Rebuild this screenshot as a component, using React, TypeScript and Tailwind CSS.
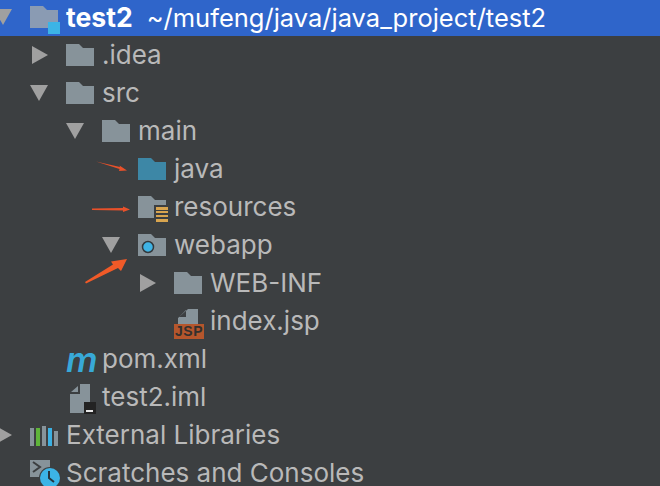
import React from "react";

const FOLDER = "M0 0H13L17 4H28V22H0Z";

function Folder({ color = "#87939a" }: { color?: string }) {
  return (
    <svg width="28" height="22" viewBox="0 0 28 22" className="block overflow-visible">
      <path d={FOLDER} fill={color} />
    </svg>
  );
}

function Down() {
  return (
    <svg width="18" height="16" viewBox="0 0 18 16" className="block">
      <path d="M0 0H18L9 16Z" fill="#a0a0a0" />
    </svg>
  );
}

function Right() {
  return (
    <svg width="16" height="18" viewBox="0 0 16 18" className="block ml-[2px]">
      <path d="M0 0L16 9L0 18Z" fill="#a0a0a0" />
    </svg>
  );
}

function ModuleIcon() {
  return (
    <svg width="30" height="28" viewBox="0 0 30 28" className="block overflow-visible mt-[6px]">
      <path d={FOLDER} fill="#8a9bb3" />
      <rect x="18" y="16" width="12" height="12" fill="#3cb4e6" />
    </svg>
  );
}

function ResourcesIcon() {
  return (
    <svg width="30" height="26" viewBox="0 0 30 26" className="block overflow-visible mt-[4px]">
      <path d={FOLDER} fill="#87939a" />
      <path d="M16 9H30V26H16Z" fill="#3c3f41" />
      <rect x="18" y="11" width="12" height="3" fill="#d9a54f" />
      <rect x="18" y="15" width="12" height="2" fill="#d9a54f" />
      <rect x="18" y="19" width="12" height="2" fill="#d9a54f" />
      <rect x="18" y="23" width="12" height="3" fill="#d9a54f" />
    </svg>
  );
}

function WebIcon() {
  return (
    <svg width="28" height="22" viewBox="0 0 28 22" className="block">
      <path d={FOLDER} fill="#87939a" />
      <circle cx="10" cy="13" r="5.5" fill="#3fb4e6" stroke="#33393d" strokeWidth="1.5" />
    </svg>
  );
}

function JspIcon() {
  return (
    <span className="relative block w-[30px] h-[30px] mt-[5px]">
      <svg width="30" height="30" viewBox="0 0 30 30" className="block">
        <path d="M14 0H24V16H4V9ZM12 1V8H5Z" fill="#87939a" fillRule="evenodd" />
      </svg>
      <span className="absolute left-0 bottom-0 w-[30px] h-[15px] bg-[#b5562c] text-[#33302e] text-[14px] leading-[15px] font-semibold text-center tracking-[0.5px] font-['Liberation_Sans',sans-serif]">
        JSP
      </span>
    </span>
  );
}

function ImlIcon() {
  return (
    <svg width="28" height="30" viewBox="0 0 28 30" className="block overflow-visible mt-[3px]">
      <path d="M10 0H20V29H0V10H10ZM8 2V8H1Z" fill="#87939a" fillRule="evenodd" />
      <rect x="14" y="18" width="12" height="12" fill="#232323" />
      <rect x="16" y="26" width="7" height="2" fill="#e6e6e6" />
    </svg>
  );
}

function LibIcon() {
  return (
    <svg width="28" height="20" viewBox="0 0 28 20" className="block mt-[2px]">
      <rect x="0" y="2" width="4" height="18" fill="#87939a" />
      <rect x="6" y="2" width="4" height="18" fill="#5fb53a" />
      <rect x="12" y="0" width="4" height="20" fill="#87939a" />
      <rect x="18" y="2" width="4" height="18" fill="#3cb0e2" />
      <rect x="24" y="5" width="4" height="15" fill="#87939a" />
    </svg>
  );
}

function ScratchIcon() {
  return (
    <svg width="30" height="30" viewBox="0 0 30 30" className="block overflow-visible mt-[4px]">
      <rect x="0" y="0" width="20" height="17" fill="#87939a" />
      <path d="M3 2L10 7L3 12" fill="none" stroke="#3c3f41" strokeWidth="2" />
      <circle cx="20" cy="18" r="11" fill="#3c3f41" />
      <circle cx="20" cy="18" r="10" fill="#3cb4e6" />
      <path d="M19 11V18L24 22" fill="none" stroke="#26353d" strokeWidth="2" />
    </svg>
  );
}

type RowProps = {
  pad: string;
  arrow?: "down" | "right";
  icon: React.ReactNode;
  children: React.ReactNode;
  selected?: boolean;
};

function Row({ pad, arrow, icon, children, selected }: RowProps) {
  return (
    <div className={`flex items-center h-[38px] whitespace-nowrap ${pad} ${selected ? "bg-[#2f65ca] text-white" : "text-[#b9b9b9]"}`}>
      <span className="w-[36px] flex justify-start items-center shrink-0">
        {arrow === "down" ? <Down /> : arrow === "right" ? <Right /> : null}
      </span>
      <span className="w-[36px] shrink-0 h-[22px] flex items-center">{icon}</span>
      <span>{children}</span>
    </div>
  );
}

export default function App() {
  return (
    <div className="relative w-[660px] h-[486px] overflow-hidden bg-[#3c3f41] text-[26px] leading-[38px] font-['Inter','Noto_Sans',sans-serif]">
      <div className="-mt-[2px] -ml-[6px] w-[666px]">
        <Row pad="pl-0" arrow="down" icon={<ModuleIcon />} selected>
          <span className="font-bold text-[26.6px]">test2</span>
          <span className="ml-[14px] text-[25.5px]">~/mufeng/java/java_project/test2</span>
        </Row>
        <Row pad="pl-9" arrow="right" icon={<Folder />}>.idea</Row>
        <Row pad="pl-9" arrow="down" icon={<Folder />}>src</Row>
        <Row pad="pl-[72px]" arrow="down" icon={<Folder />}>main</Row>
        <Row pad="pl-[108px]" icon={<Folder color="#3d87a6" />}>java</Row>
        <Row pad="pl-[108px]" icon={<ResourcesIcon />}>resources</Row>
        <Row pad="pl-[108px]" arrow="down" icon={<WebIcon />}>webapp</Row>
        <Row pad="pl-[144px]" arrow="right" icon={<Folder />}>WEB-INF</Row>
        <Row pad="pl-[144px]" icon={<JspIcon />}>index.jsp</Row>
        <Row pad="pl-9" icon={<span className="w-[28px] text-[#38a9d8] text-[35px] leading-[22px] italic font-semibold">m</span>}>pom.xml</Row>
        <Row pad="pl-9" icon={<span className="ml-[4px]"><ImlIcon /></span>}>test2.iml</Row>
        <Row pad="pl-0" arrow="right" icon={<LibIcon />}>External Libraries</Row>
        <Row pad="pl-0" icon={<ScratchIcon />}>Scratches and Consoles</Row>
      </div>
      <svg width="660" height="486" viewBox="0 0 660 486" className="absolute inset-0 pointer-events-none">
        <path d="M96 161.5L120 167L119.5 165.5L127 170.5L119 171L119.5 169Z" fill="#e8512a" />
        <path d="M92 208.5L123 208V206.5L130 209.5L123 212V210.5L92 210Z" fill="#e8512a" />
        <path d="M85 282L113 264.5L111 261.5L127 259L121 271L118 268L86 283.5Z" fill="#f05a28" />
      </svg>
    </div>
  );
}
